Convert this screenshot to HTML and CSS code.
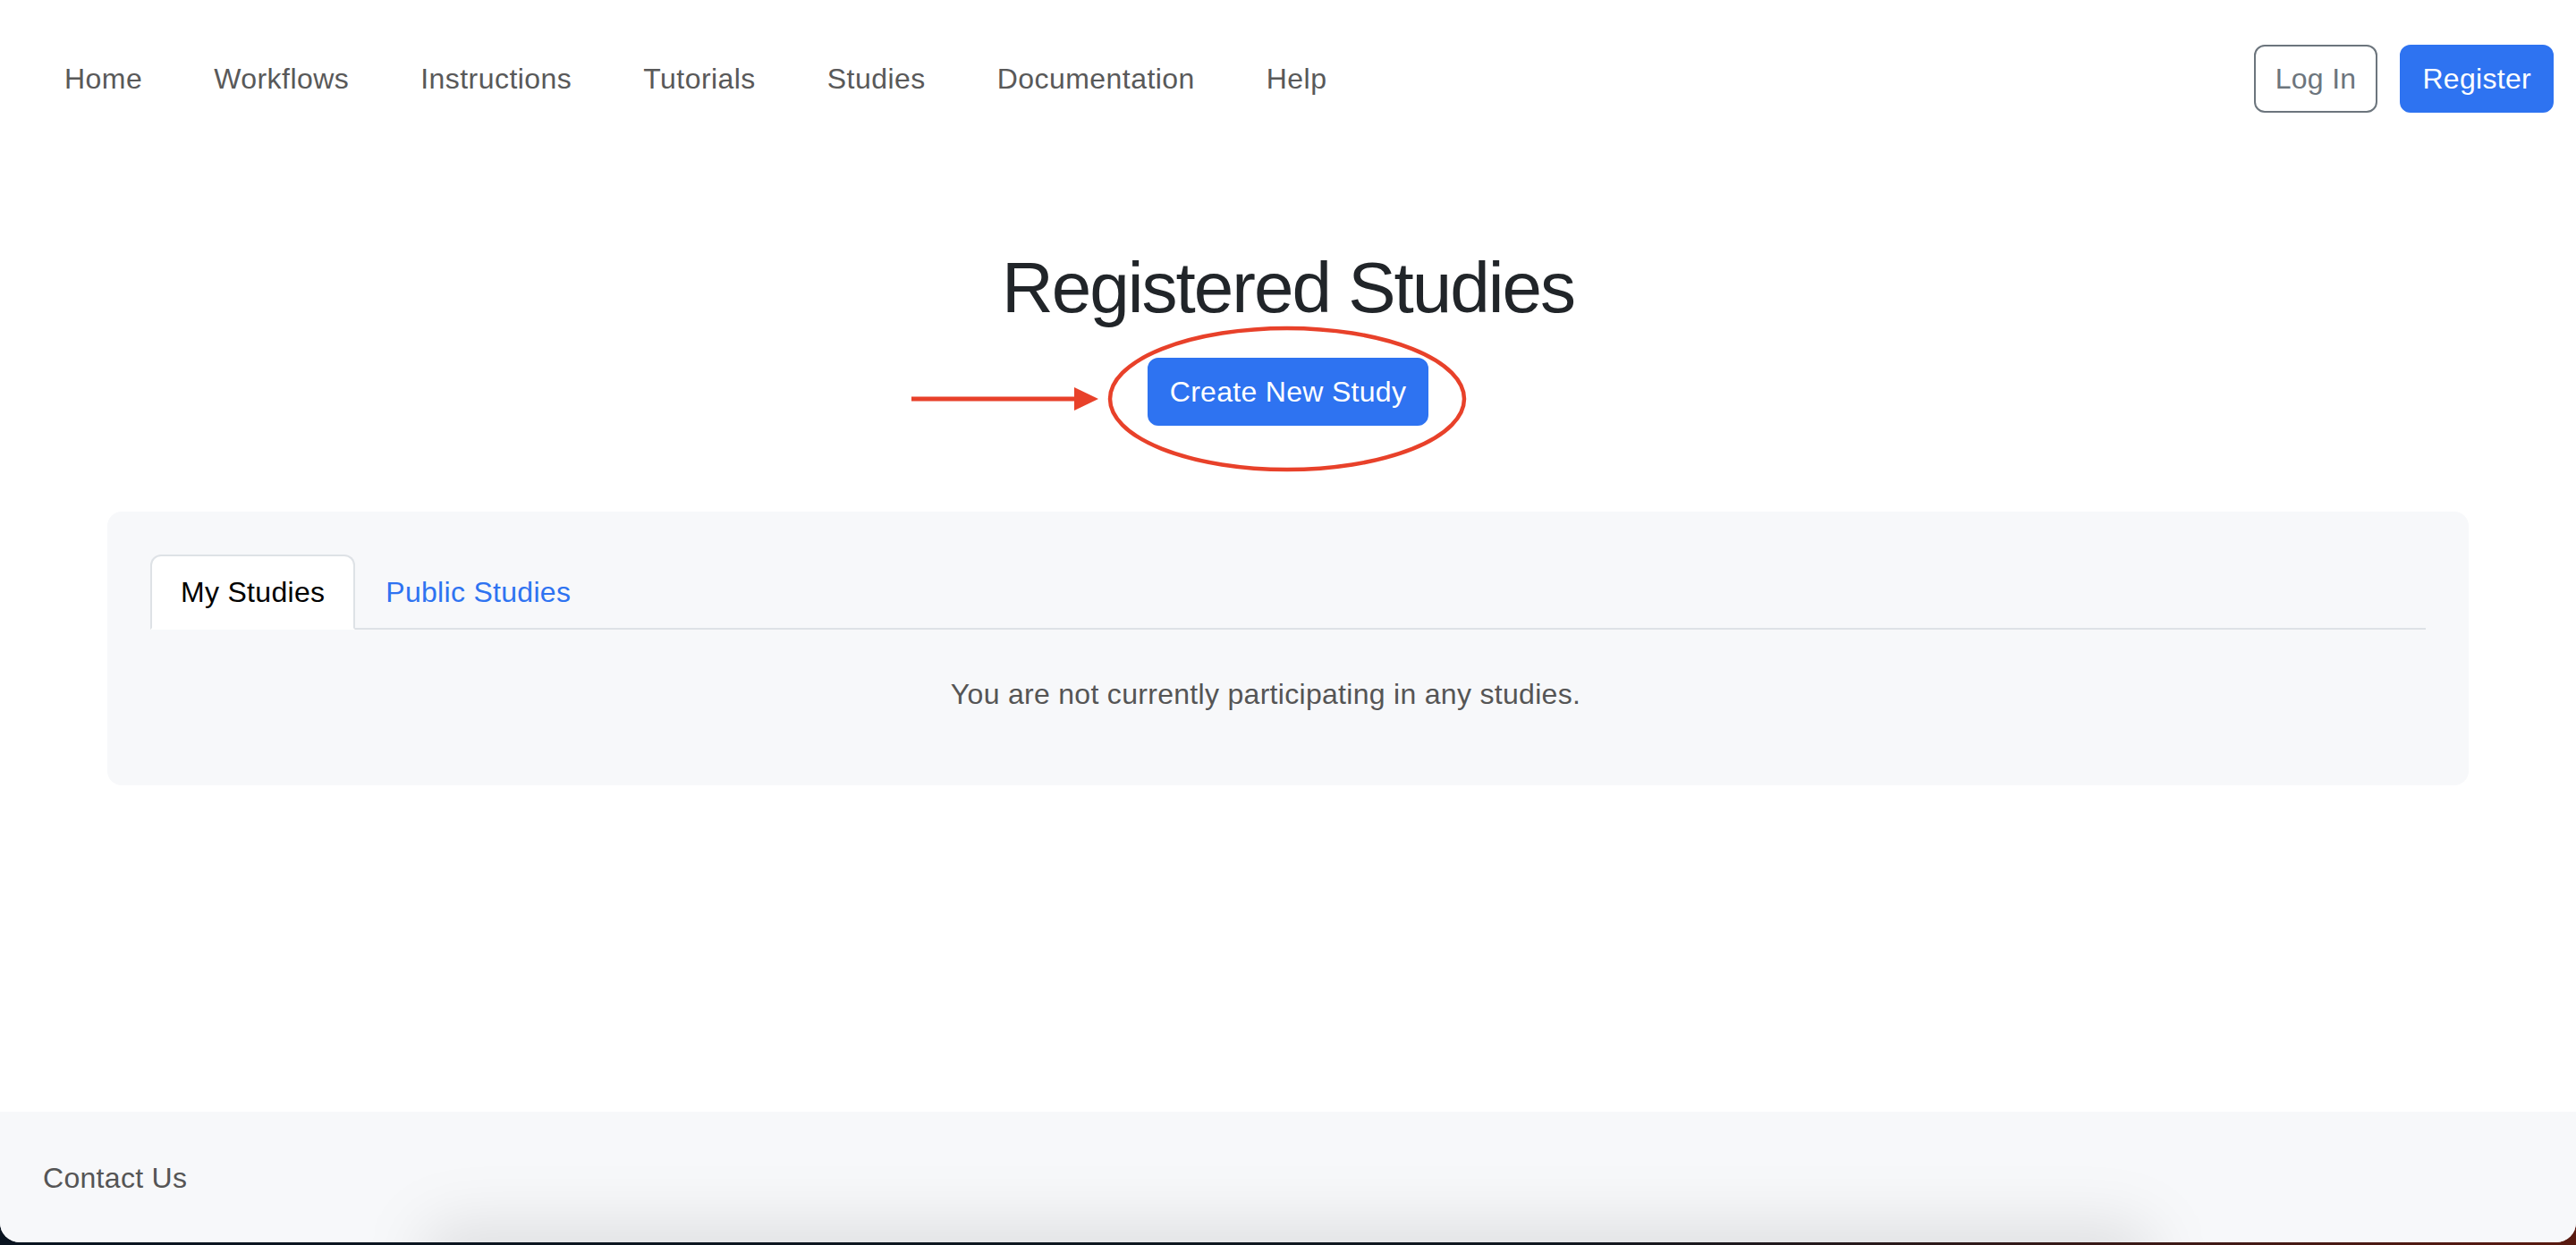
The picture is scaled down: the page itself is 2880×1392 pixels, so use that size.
FILE: index.html
```html
<!DOCTYPE html>
<html lang="en">
<head>
<meta charset="utf-8">
<title>Registered Studies</title>
<link rel="stylesheet" href="styles.css">
</head>
<body>
<div class="window">
  <header class="navbar">
    <nav class="nav-links">
      <a class="nav-link" href="#">Home</a>
      <a class="nav-link" href="#">Workflows</a>
      <a class="nav-link" href="#">Instructions</a>
      <a class="nav-link" href="#">Tutorials</a>
      <a class="nav-link" href="#">Studies</a>
      <a class="nav-link" href="#">Documentation</a>
      <a class="nav-link" href="#">Help</a>
    </nav>
    <div class="auth">
      <a class="btn btn-outline" href="#">Log In</a>
      <a class="btn btn-primary" href="#">Register</a>
    </div>
  </header>

  <main class="main">
    <h1 class="title">Registered Studies</h1>
    <div class="create-wrap">
      <a class="btn btn-primary btn-create" href="#">Create New Study</a>
      <svg class="annotation" width="640" height="172" viewBox="0 0 640 172" aria-hidden="true">
        <line x1="9" y1="86" x2="194" y2="86" stroke="#e8412a" stroke-width="5"/>
        <polygon points="191,73 218,86 191,99" fill="#e8412a"/>
        <ellipse cx="429" cy="86" rx="198" ry="79" fill="none" stroke="#e8412a" stroke-width="4.5"/>
      </svg>
    </div>

    <section class="card">
      <div class="tabs">
        <a class="tab tab-active" href="#">My Studies</a>
        <a class="tab" href="#">Public Studies</a>
      </div>
      <p class="empty">You are not currently participating in any studies.</p>
    </section>
  </main>

  <footer class="footer">
    <span class="contact">Contact Us</span>
    <div class="dock-shadow"></div>
  </footer>
</div>
</body>
</html>
```

FILE: styles.css
```css
html {
  margin: 0;
  background: linear-gradient(90deg, #0a1420 0%, #101820 60%, #5a1a10 100%);
}

body {
  margin: 0;
  font-family: "Liberation Sans", Arial, sans-serif;
  font-size: 32px;
  line-height: 1.5;
  letter-spacing: 0.3px;
  color: #212529;
}

.window {
  height: 1389px;
  background: #ffffff;
  border-radius: 0 0 22px 22px;
  overflow: hidden;
  display: flex;
  flex-direction: column;
}

a {
  text-decoration: none;
}

/* Navbar */
.navbar {
  display: flex;
  align-items: center;
  justify-content: space-between;
  padding: 50px 25px 0 72px;
  height: 76px;
}

.nav-links {
  display: flex;
  gap: 80px;
}

.nav-link {
  color: #595959;
  letter-spacing: 0.45px;
}

.auth {
  display: flex;
  gap: 25px;
}

.btn {
  display: inline-block;
  padding: 12px 23px;
  border: 2px solid transparent;
  border-radius: 12px;
  line-height: 48px;
  font-size: 32px;
}

.btn-outline {
  color: #6c757d;
  border-color: #6c757d;
  padding: 12px 22px;
}

.btn-primary {
  background: #2e73f1;
  border-color: #2e73f1;
  color: #ffffff;
}

/* Main */
.main {
  flex: 1;
  display: flex;
  flex-direction: column;
  align-items: center;
}

.title {
  margin: 148px 0 0;
  font-size: 80px;
  font-weight: 400;
  line-height: 96px;
  letter-spacing: -2px;
  color: #212529;
}

.create-wrap {
  position: relative;
  margin-top: 30px;
}

.btn-create {
  padding: 12px 23px;
}

.annotation {
  position: absolute;
  left: -273px;
  top: -40px;
  pointer-events: none;
}

/* Card */
.card {
  margin-top: 96px;
  align-self: stretch;
  margin-left: 120px;
  margin-right: 120px;
  background: #f7f8fa;
  border-radius: 16px;
  padding: 48px 48px 48px;
}

.tabs {
  display: flex;
  border-bottom: 2px solid #dee2e6;
}

.tab {
  padding: 16px 32px;
  margin-bottom: -2px;
  border: 2px solid transparent;
  border-radius: 12px 12px 0 0;
  color: #2e73f1;
}

.tab-active {
  background: #ffffff;
  color: #000000;
  border-color: #dee2e6 #dee2e6 #ffffff;
}

.empty {
  margin: 0 0 30px;
  padding: 48px 50px 0 0;
  text-align: center;
  color: #555555;
}

/* Footer */
.footer {
  position: relative;
  background: #f7f8fa;
  height: 146px;
  padding: 50px 48px 0;
  box-sizing: border-box;
  color: #555555;
}

.dock-shadow {
  position: absolute;
  left: 470px;
  right: 470px;
  bottom: -60px;
  height: 80px;
  border-radius: 40px;
  background: rgba(0, 0, 0, 0.1);
  filter: blur(34px);
}
```
